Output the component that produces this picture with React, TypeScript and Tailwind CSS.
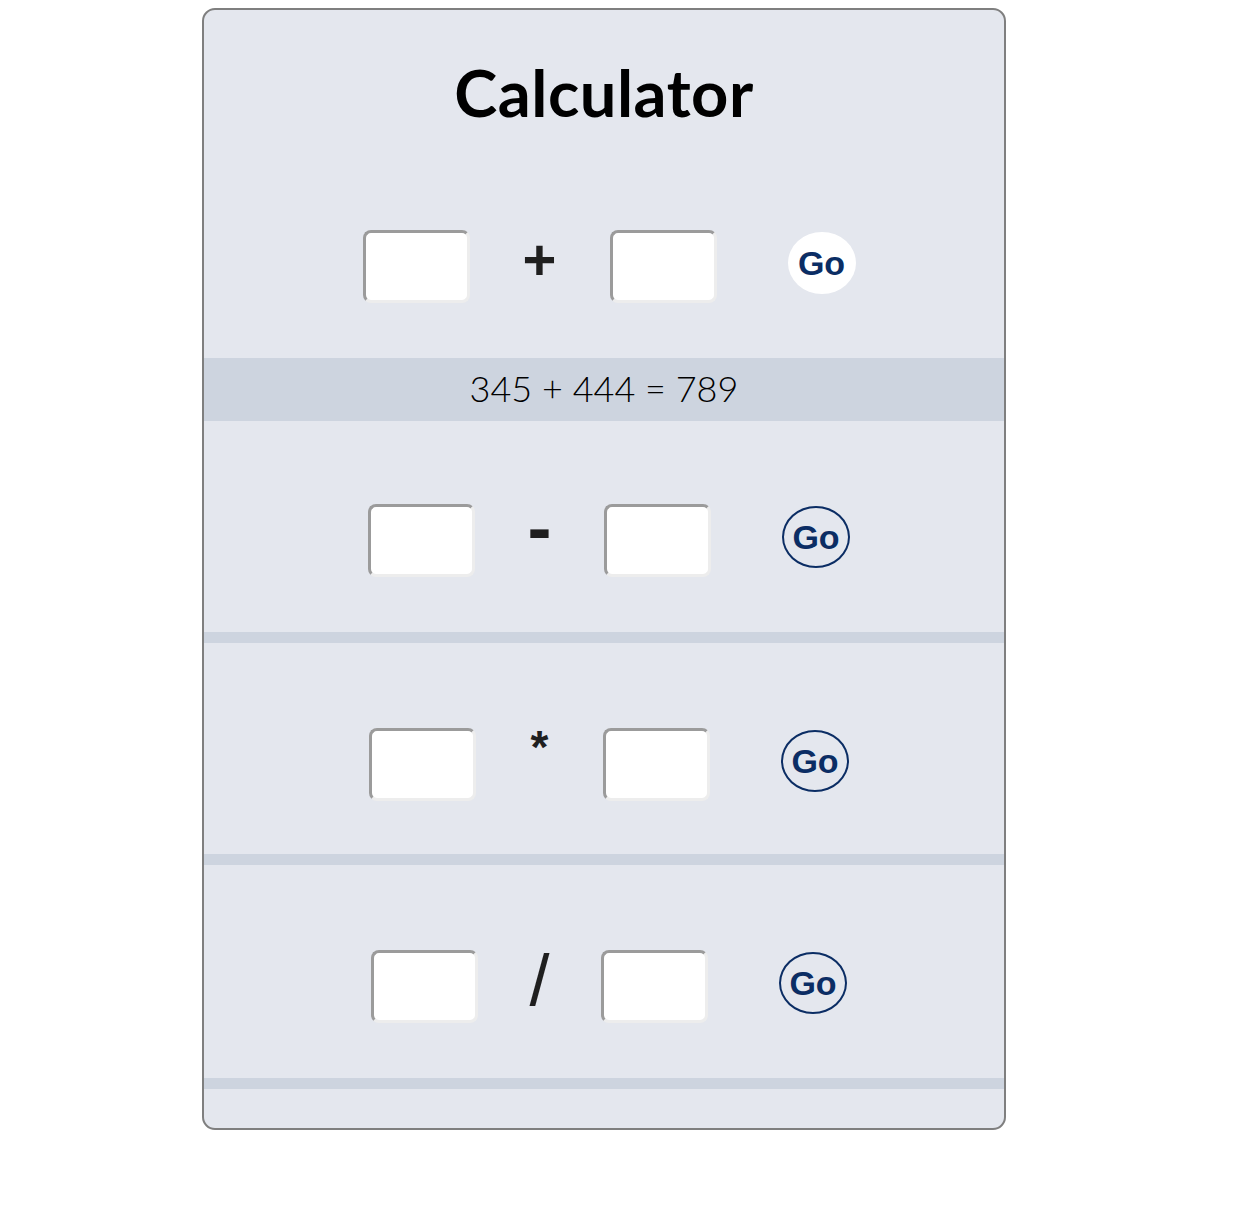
import React from "react";

function NumInput() {
  return (
    <input
      type="text"
      className="w-[107px] h-[73px] shrink-0 bg-white rounded-[8px] border-[3px] border-t-[#9b9b9b] border-l-[#9b9b9b] border-b-[#ededed] border-r-[#ededed] outline-none"
    />
  );
}

function GoButton({ filled }: { filled?: boolean }) {
  return (
    <button
      className={
        "w-[68px] h-[62px] shrink-0 mt-[2px] rounded-[50%] flex items-center justify-center text-[#0b2d64] text-[34px] font-bold leading-none " +
        (filled ? "bg-white" : "border-2 border-[#0b2d64] bg-transparent")
      }
      style={{ fontFamily: '"Liberation Sans", Arial, sans-serif' }}
    >
      Go
    </button>
  );
}

function Row({
  op,
  opWidth,
  opClass,
  filled,
}: {
  op: string;
  opWidth: string;
  opClass: string;
  filled?: boolean;
}) {
  return (
    <div className="flex items-start justify-center pl-[10px] h-[73px]">
      <NumInput />
      <div className={"flex justify-center shrink-0 " + opWidth}>
        <span
          className={"text-[#1f1f1f] leading-none " + opClass}
          style={{ fontFamily: '"Liberation Sans", Arial, sans-serif' }}
        >
          {op}
        </span>
      </div>
      <NumInput />
      <div className="w-[71px] shrink-0" />
      <GoButton filled={filled} />
    </div>
  );
}

export default function App() {
  return (
    <div className="min-h-screen bg-white pt-[8px] pl-[202px]">
      <div className="w-[804px] h-[1122px] bg-[#e4e7ee] border-2 border-[#7f7f7f] rounded-[13px] overflow-hidden flex flex-col">
        <h1
          className="text-center text-black text-[65px] font-bold leading-none pt-[50px] h-[220px] tracking-[0.5px]"
          style={{ fontFamily: 'Lato, "Noto Sans", sans-serif' }}
        >
          Calculator
        </h1>

        <Row op="+" opWidth="w-[140px]" opClass="text-[58px] font-bold mt-[1px]" filled />
        <div className="h-[55px]" />
        <div
          className="h-[63px] bg-[#cdd4df] flex items-center justify-center pb-[4px] text-[36px] font-light text-black"
          style={{ fontFamily: 'Lato, "Noto Sans", sans-serif' }}
        >
          345 + 444 = 789
        </div>

        <div className="h-[83px]" />
        <Row op="-" opWidth="w-[129px]" opClass="text-[72px] font-bold mt-[-13px]" />
        <div className="h-[55px]" />
        <div className="h-[11px] bg-[#cdd4df]" />

        <div className="h-[85px]" />
        <Row op="*" opWidth="w-[127px]" opClass="text-[46px] font-bold mt-[-4px]" />
        <div className="h-[53px]" />
        <div className="h-[11px] bg-[#cdd4df]" />

        <div className="h-[85px]" />
        <Row op="/" opWidth="w-[123px]" opClass="text-[72px] mt-[-6px]" />
        <div className="h-[55px]" />
        <div className="h-[11px] bg-[#cdd4df]" />
      </div>
    </div>
  );
}
